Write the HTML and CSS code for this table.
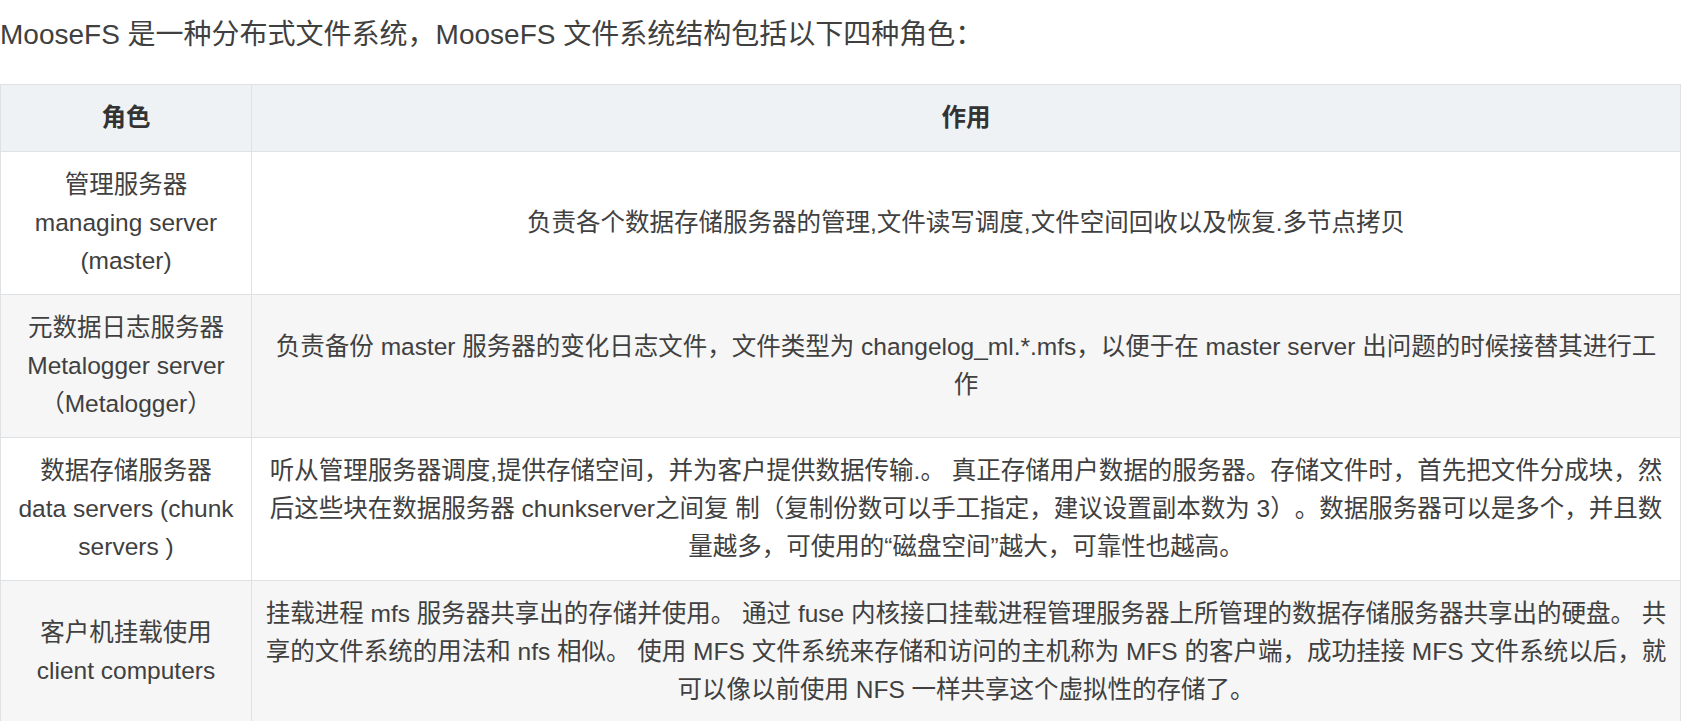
FILE: index.html
```html
<!DOCTYPE html>
<html lang="zh-CN">
<head>
    <meta charset="UTF-8">
    <meta name="viewport" content="width=device-width, initial-scale=1.0">
    <title>MooseFS</title>
    <link rel="stylesheet" href="styles.css">
</head>
<body>
    <div class="article">
        <p class="intro">MooseFS 是一种分布式文件系统，MooseFS 文件系统结构包括以下四种角色：</p>
        <table class="roles">
            <colgroup>
                <col class="col-role">
                <col>
            </colgroup>
            <thead>
                <tr>
                    <th>角色</th>
                    <th>作用</th>
                </tr>
            </thead>
            <tbody>
                <tr>
                    <td>管理服务器 managing server (master)</td>
                    <td>负责各个数据存储服务器的管理,文件读写调度,文件空间回收以及恢复.多节点拷贝</td>
                </tr>
                <tr>
                    <td>元数据日志服务器 Metalogger server（Metalogger）</td>
                    <td>负责备份 master 服务器的变化日志文件，文件类型为 changelog_ml.*.mfs，以便于在 master server 出问题的时候接替其进行工作</td>
                </tr>
                <tr>
                    <td>数据存储服务器 data servers (chunk servers )</td>
                    <td>听从管理服务器调度,提供存储空间，并为客户提供数据传输.。 真正存储用户数据的服务器。存储文件时，首先把文件分成块，然后这些块在数据服务器 chunkserver之间复 制（复制份数可以手工指定，建议设置副本数为 3）。数据服务器可以是多个，并且数量越多，可使用的“磁盘空间”越大，可靠性也越高。</td>
                </tr>
                <tr>
                    <td>客户机挂载使用 client computers</td>
                    <td>挂载进程 mfs 服务器共享出的存储并使用。 通过 fuse 内核接口挂载进程管理服务器上所管理的数据存储服务器共享出的硬盘。 共享的文件系统的用法和 nfs 相似。 使用 MFS 文件系统来存储和访问的主机称为 MFS 的客户端，成功挂接 MFS 文件系统以后，就可以像以前使用 NFS 一样共享这个虚拟性的存储了。</td>
                </tr>
            </tbody>
        </table>
    </div>
</body>
</html>
```

FILE: styles.css
```css
* {
    margin: 0;
    padding: 0;
    box-sizing: border-box;
}
body {
    font-family: "Liberation Sans", "Noto Sans CJK SC", sans-serif;
    color: #404040;
    background-color: #fff;
    text-spacing-trim: space-all;
}
.intro {
    margin: 14px 0 28px;
    font-size: 28px;
    line-height: 42px;
}
.roles {
    width: 100%;
    border-collapse: collapse;
    table-layout: fixed;
    font-size: 24.5px;
    line-height: 38px;
    text-align: center;
}
.col-role {
    width: 251px;
}
.roles th,
.roles td {
    border: 1px solid #dfe2e5;
    padding: 14px 13px;
    vertical-align: middle;
}
.roles th {
    background-color: #eff2f5;
    font-weight: bold;
    color: #333;
}
.roles tbody tr:nth-child(even) td {
    background-color: #f6f6f6;
}
```
